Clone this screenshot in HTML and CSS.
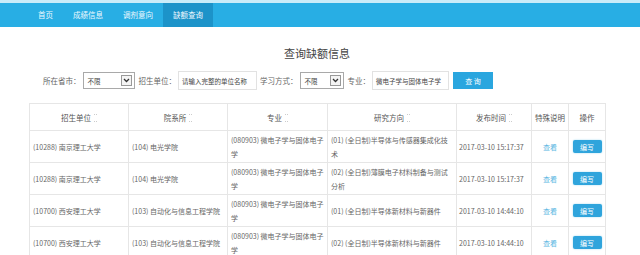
FILE: index.html
```html
<!DOCTYPE html>
<html lang="zh-CN">
<head>
    <meta charset="UTF-8">
    <title>查询缺额信息</title>
    <link rel="stylesheet" href="styles.css">
</head>
<body>
    <div class="barra">
        <ul class="menu">
            <li>首页</li>
            <li>成绩信息</li>
            <li>调剂意向</li>
            <li class="activo">缺额查询</li>
        </ul>
    </div>
    <div class="contenido">
        <h2 class="titulo">查询缺额信息</h2>
        <div class="filtros">
            <label>所在省市：</label>
            <div class="selector s1"><span>不限</span><i class="flecha"><svg width="7" height="5" viewBox="0 0 7 5"><path d="M1 1 L3.5 3.5 L6 1" fill="none" stroke="#333" stroke-width="1.3"/></svg></i></div>
            <label>招生单位：</label>
            <div class="campo c1">请输入完整的单位名称</div>
            <label>学习方式：</label>
            <div class="selector s2"><span>不限</span><i class="flecha"><svg width="7" height="5" viewBox="0 0 7 5"><path d="M1 1 L3.5 3.5 L6 1" fill="none" stroke="#333" stroke-width="1.3"/></svg></i></div>
            <label>专业：</label>
            <div class="campo c2">微电子学与固体电子学</div>
            <button class="btnBuscar">查 询</button>
        </div>
        <table class="tabla">
            <colgroup>
                <col style="width:99px"><col style="width:99px"><col style="width:100px"><col style="width:129px"><col style="width:75px"><col style="width:37px"><col style="width:37px">
            </colgroup>
            <thead>
                <tr>
                    <th>招生单位<i class="orden"></i></th>
                    <th>院系所<i class="orden"></i></th>
                    <th>专业<i class="orden"></i></th>
                    <th>研究方向<i class="orden"></i></th>
                    <th>发布时间<i class="orden"></i></th>
                    <th>特殊说明</th>
                    <th>操作</th>
                </tr>
            </thead>
            <tbody>
                <tr>
                    <td>(10288) 南京理工大学</td>
                    <td>(104) 电光学院</td>
                    <td>(080903) 微电子学与固体电子学</td>
                    <td>(01) (全日制)半导体与传感器集成化技术</td>
                    <td class="fecha">2017-03-10 15:17:37</td>
                    <td class="centro"><a>查看</a></td>
                    <td class="centro"><button class="btnEditar">编写</button></td>
                </tr>
                <tr>
                    <td>(10288) 南京理工大学</td>
                    <td>(104) 电光学院</td>
                    <td>(080903) 微电子学与固体电子学</td>
                    <td>(02) (全日制)薄膜电子材料制备与测试分析</td>
                    <td class="fecha">2017-03-10 15:17:37</td>
                    <td class="centro"><a>查看</a></td>
                    <td class="centro"><button class="btnEditar">编写</button></td>
                </tr>
                <tr>
                    <td>(10700) 西安理工大学</td>
                    <td>(103) 自动化与信息工程学院</td>
                    <td>(080903) 微电子学与固体电子学</td>
                    <td>(01) (全日制)半导体新材料与新器件</td>
                    <td class="fecha">2017-03-10 14:44:10</td>
                    <td class="centro"><a>查看</a></td>
                    <td class="centro"><button class="btnEditar">编写</button></td>
                </tr>
                <tr>
                    <td>(10700) 西安理工大学</td>
                    <td>(103) 自动化与信息工程学院</td>
                    <td>(080903) 微电子学与固体电子学</td>
                    <td>(02) (全日制)半导体新材料与新器件</td>
                    <td class="fecha">2017-03-10 14:44:10</td>
                    <td class="centro"><a>查看</a></td>
                    <td class="centro"><button class="btnEditar">编写</button></td>
                </tr>
            </tbody>
        </table>
    </div>
</body>
</html>
```

FILE: styles.css
```css
body{
    margin: 0;
    padding: 0;
    font-family: "Noto Sans CJK SC", sans-serif;
    font-size: 7px;
    color: #666;
    background: #fff;
    overflow: hidden;
}
.barra{
    border-top: 3px solid #c9ecf9;
    background-color: #28aee4;
    height: 24px;
}
.menu{
    list-style: none;
    margin: 0;
    padding: 0 0 0 28px;
    display: flex;
    height: 100%;
}
.menu li{
    padding: 0 10px;
    line-height: 24px;
    color: #eef9fe;
    font-size: 7.5px;
}
.menu .activo{
    background-color: #1c93c9;
}
.contenido{
    width: 576px;
    margin-left: 29px;
}
.titulo{
    margin: 0;
    padding-top: 18px;
    text-align: center;
    font-size: 11px;
    font-weight: normal;
    color: #444;
    line-height: 16px;
}
.filtros{
    display: flex;
    align-items: center;
    margin: 10px 0 0 14px;
    height: 19px;
}
.filtros label{
    color: #666;
    font-size: 7.5px;
    margin-right: 2px;
}
.selector{
    display: flex;
    align-items: center;
    justify-content: space-between;
    height: 17px;
    border: 1px solid #a9a9a9;
    padding-left: 4px;
    margin-right: 4px;
    box-sizing: border-box;
    font-size: 6.5px;
    color: #444;
}
.s1{
    width: 52px;
}
.s2{
    width: 44px;
}
.flecha{
    display: flex;
    align-items: center;
    justify-content: center;
    width: 9px;
    height: 9px;
    border: 1px solid #999;
    margin-right: 2px;
    background: #f4f4f4;
}
.campo{
    height: 19px;
    line-height: 19px;
    border: 1px solid #e2e2e2;
    box-sizing: border-box;
    padding: 0 3px;
    font-size: 6.5px;
    color: #444;
    margin-right: 3px;
    white-space: nowrap;
    overflow: hidden;
}
.c1{
    width: 79px;
}
.c2{
    width: 77px;
}
.btnBuscar{
    margin-left: 1px;
    width: 40px;
    height: 17px;
    border: none;
    background-color: #2aa6df;
    color: #fff;
    font-family: inherit;
    font-size: 7px;
    padding: 0;
}
.tabla{
    margin-top: 13px;
    width: 576px;
    table-layout: fixed;
    border-collapse: collapse;
}
.tabla th{
    height: 26px;
    padding: 0;
    font-weight: normal;
    font-size: 7.5px;
    color: #555;
    border: 1px solid #e6e6e6;
    text-align: center;
}
.tabla td{
    height: 31px;
    padding: 0 2px 0 3px;
    line-height: 14px;
    border: 1px solid #e6e6e6;
    vertical-align: middle;
    word-break: break-all;
}
.tabla .fecha{
    padding-left: 2px;
}
.tabla .centro{
    text-align: center;
    padding: 0;
}
.orden{
    display: inline-block;
    width: 3px;
    height: 6px;
    margin-left: 3px;
    vertical-align: -1px;
    border-top: 1px dotted #ccc;
    border-bottom: 1px dotted #ccc;
}
.tabla a{
    color: #5ab7e2;
}
.btnEditar{
    width: 29px;
    height: 13px;
    border: none;
    border-radius: 2px;
    background-color: #2fa4dc;
    color: #fff;
    font-family: inherit;
    font-size: 7px;
    padding: 0;
    box-shadow: 0 0 2px #9fd8f0;
}
```
